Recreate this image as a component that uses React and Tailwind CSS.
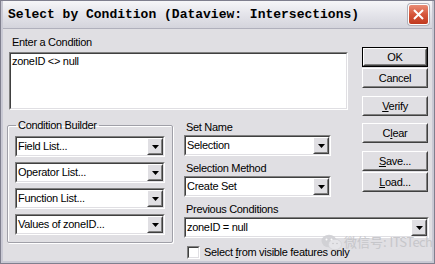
import React from 'react';

const sunken =
  'border border-t-[#808080] border-l-[#808080] border-b-white border-r-white';
const sunkenInner =
  'border border-t-[#404040] border-l-[#404040] border-b-[#e0dfe3] border-r-[#e0dfe3]';
const raised =
  'border border-t-white border-l-white border-b-[#404040] border-r-[#404040]';
const raisedInner =
  'border border-t-[#e0dfe3] border-l-[#e0dfe3] border-b-[#808080] border-r-[#808080]';

function Combo({ value, className = '' }) {
  return (
    <div className={`${sunken} h-[21px] bg-white ${className}`}>
      <div className={`${sunkenInner} h-full flex items-center`}>
        <span className="flex-1 pl-[1px] truncate leading-[13px]">{value}</span>
        <div className={`${raised} h-full w-[16px] bg-[#ece9d8] shrink-0`}>
          <div className={`${raisedInner} h-full flex items-center justify-center bg-[#e0dfe3]`}>
            <svg width="7" height="4" viewBox="0 0 7 4">
              <path d="M0 0h7L3.5 4z" fill="#000" />
            </svg>
          </div>
        </div>
      </div>
    </div>
  );
}

function Btn({ children, isDefault }) {
  return (
    <div className={`h-[20px] w-[66px] ${isDefault ? 'border border-black' : ''}`}>
      <div className={`${raised} h-full`}>
        <div className={`${raisedInner} h-full flex items-center justify-center leading-[13px]`}>
          {children}
        </div>
      </div>
    </div>
  );
}

function Label({ children, className = '' }) {
  return <div className={`leading-[13px] pl-[2px] ${className}`}>{children}</div>;
}

export default function App() {
  return (
    <div className="w-[435px] h-[264px] bg-[#7f7f8e] p-[1px] font-['Liberation_Sans',Arial,sans-serif] text-[11px] tracking-[-0.3px] text-black">
      <div className="h-full w-full bg-[#c9c9d4] px-[2px] pb-[2px] flex flex-col">
        {/* Title bar */}
        <div className="h-[27px] shrink-0 flex items-center justify-between bg-gradient-to-b from-[#f6f6f8] via-[#e4e4ea] to-[#d4d4dc] pl-[5px] pr-[3px]">
          <span className="font-['Liberation_Mono',monospace] font-bold text-[13px] tracking-normal">
            Select by Condition (Dataview: Intersections)
          </span>
          <div className="w-[21px] h-[21px] rounded-[3px] border border-white bg-gradient-to-b from-[#e88c75] via-[#d6553a] to-[#c0391f] flex items-center justify-center shadow-[0_0_0_1px_#b0b0b8]">
            <svg width="11" height="11" viewBox="0 0 11 11">
              <path d="M1 1L10 10M10 1L1 10" stroke="#fff" strokeWidth="2" />
            </svg>
          </div>
        </div>

        {/* Body */}
        <div className="relative flex-1 overflow-hidden bg-[#e0dfe3] flex pl-[6px] border-t border-[#b0b0bc]">
          <div className="w-[339px] shrink-0 pt-[7px]">
            <Label className="pl-[3px]">Enter a Condition</Label>
            <div className={`${sunken} mt-[3px] h-[58px] bg-white`}>
              <div className={`${sunkenInner} h-full pl-[1px] pt-[1px] leading-[13px]`}>
                zoneID &lt;&gt; null
              </div>
            </div>

            <div className="flex mt-[9px] -ml-[2px]">
              <fieldset className="w-[166px] h-[124px] border border-[#a0a0a8] rounded-[2px] shadow-[inset_1px_1px_0_#fff,1px_1px_0_#fff] px-[7px]">
                <legend className="ml-[1px] px-[2px] leading-[13px]">Condition Builder</legend>
                <div className="flex flex-col gap-[5px] mt-[4px]">
                  <Combo value="Field List..." />
                  <Combo value="Operator List..." />
                  <Combo value="Function List..." />
                  <Combo value="Values of zoneID..." />
                </div>
              </fieldset>

              <div className="ml-[11px] w-[147px] flex flex-col">
                <Label className="mt-[2px]">Set Name</Label>
                <Combo value="Selection" className="mt-[1px]" />
                <Label className="mt-[6px]">Selection Method</Label>
                <Combo value="Create Set" className="mt-[1px]" />
                <Label className="mt-[6px]">Previous Conditions</Label>
                <Combo value="zoneID = null" className="mt-[1px] w-[245px]" />
                <div className="flex items-center mt-[8px] pl-[3px] whitespace-nowrap">
                  <div className={`${sunken} w-[13px] h-[13px] bg-white shrink-0`}>
                    <div className={`${sunkenInner} h-full`} />
                  </div>
                  <span className="ml-[4px] leading-[13px]">
                    Select <span className="underline">f</span>rom visible features only
                  </span>
                </div>
              </div>
            </div>
          </div>

          <div className="ml-[14px] pt-[18px] flex flex-col">
            <Btn isDefault>OK</Btn>
            <div className="mt-[1px]"><Btn>Cancel</Btn></div>
            <div className="mt-[8px]"><Btn><span><span className="underline">V</span>erify</span></Btn></div>
            <div className="mt-[7px]"><Btn><span>C<span className="underline">l</span>ear</span></Btn></div>
            <div className="mt-[8px]"><Btn><span><span className="underline">S</span>ave...</span></Btn></div>
            <div className="mt-[1px]"><Btn><span><span className="underline">L</span>oad...</span></Btn></div>
          </div>

          {/* watermark */}
          <div className="absolute left-[318px] top-[204px] flex items-center gap-[2px] whitespace-nowrap text-[#c4c4c8] opacity-90 pointer-events-none">
            <svg width="21" height="17" viewBox="0 0 21 17">
              <ellipse cx="8" cy="7" rx="7.5" ry="6.3" fill="#d0d0d4" />
              <ellipse cx="14" cy="10.5" rx="6.5" ry="5.3" fill="#e6e6ea" stroke="#d0d0d4" strokeWidth="0.8" />
              <circle cx="5.5" cy="5.5" r="1" fill="#fff" />
              <circle cx="10.5" cy="5.5" r="1" fill="#fff" />
              <circle cx="12" cy="9.5" r="0.8" fill="#c4c4c8" />
              <circle cx="16" cy="9.5" r="0.8" fill="#c4c4c8" />
            </svg>
            <span className="font-['Noto_Sans_CJK_SC',sans-serif] text-[13px] tracking-normal leading-[18px]">
              微信号: <span className="tracking-[-0.6px]">ITSTech</span>
            </span>
          </div>
        </div>
      </div>
    </div>
  );
}
